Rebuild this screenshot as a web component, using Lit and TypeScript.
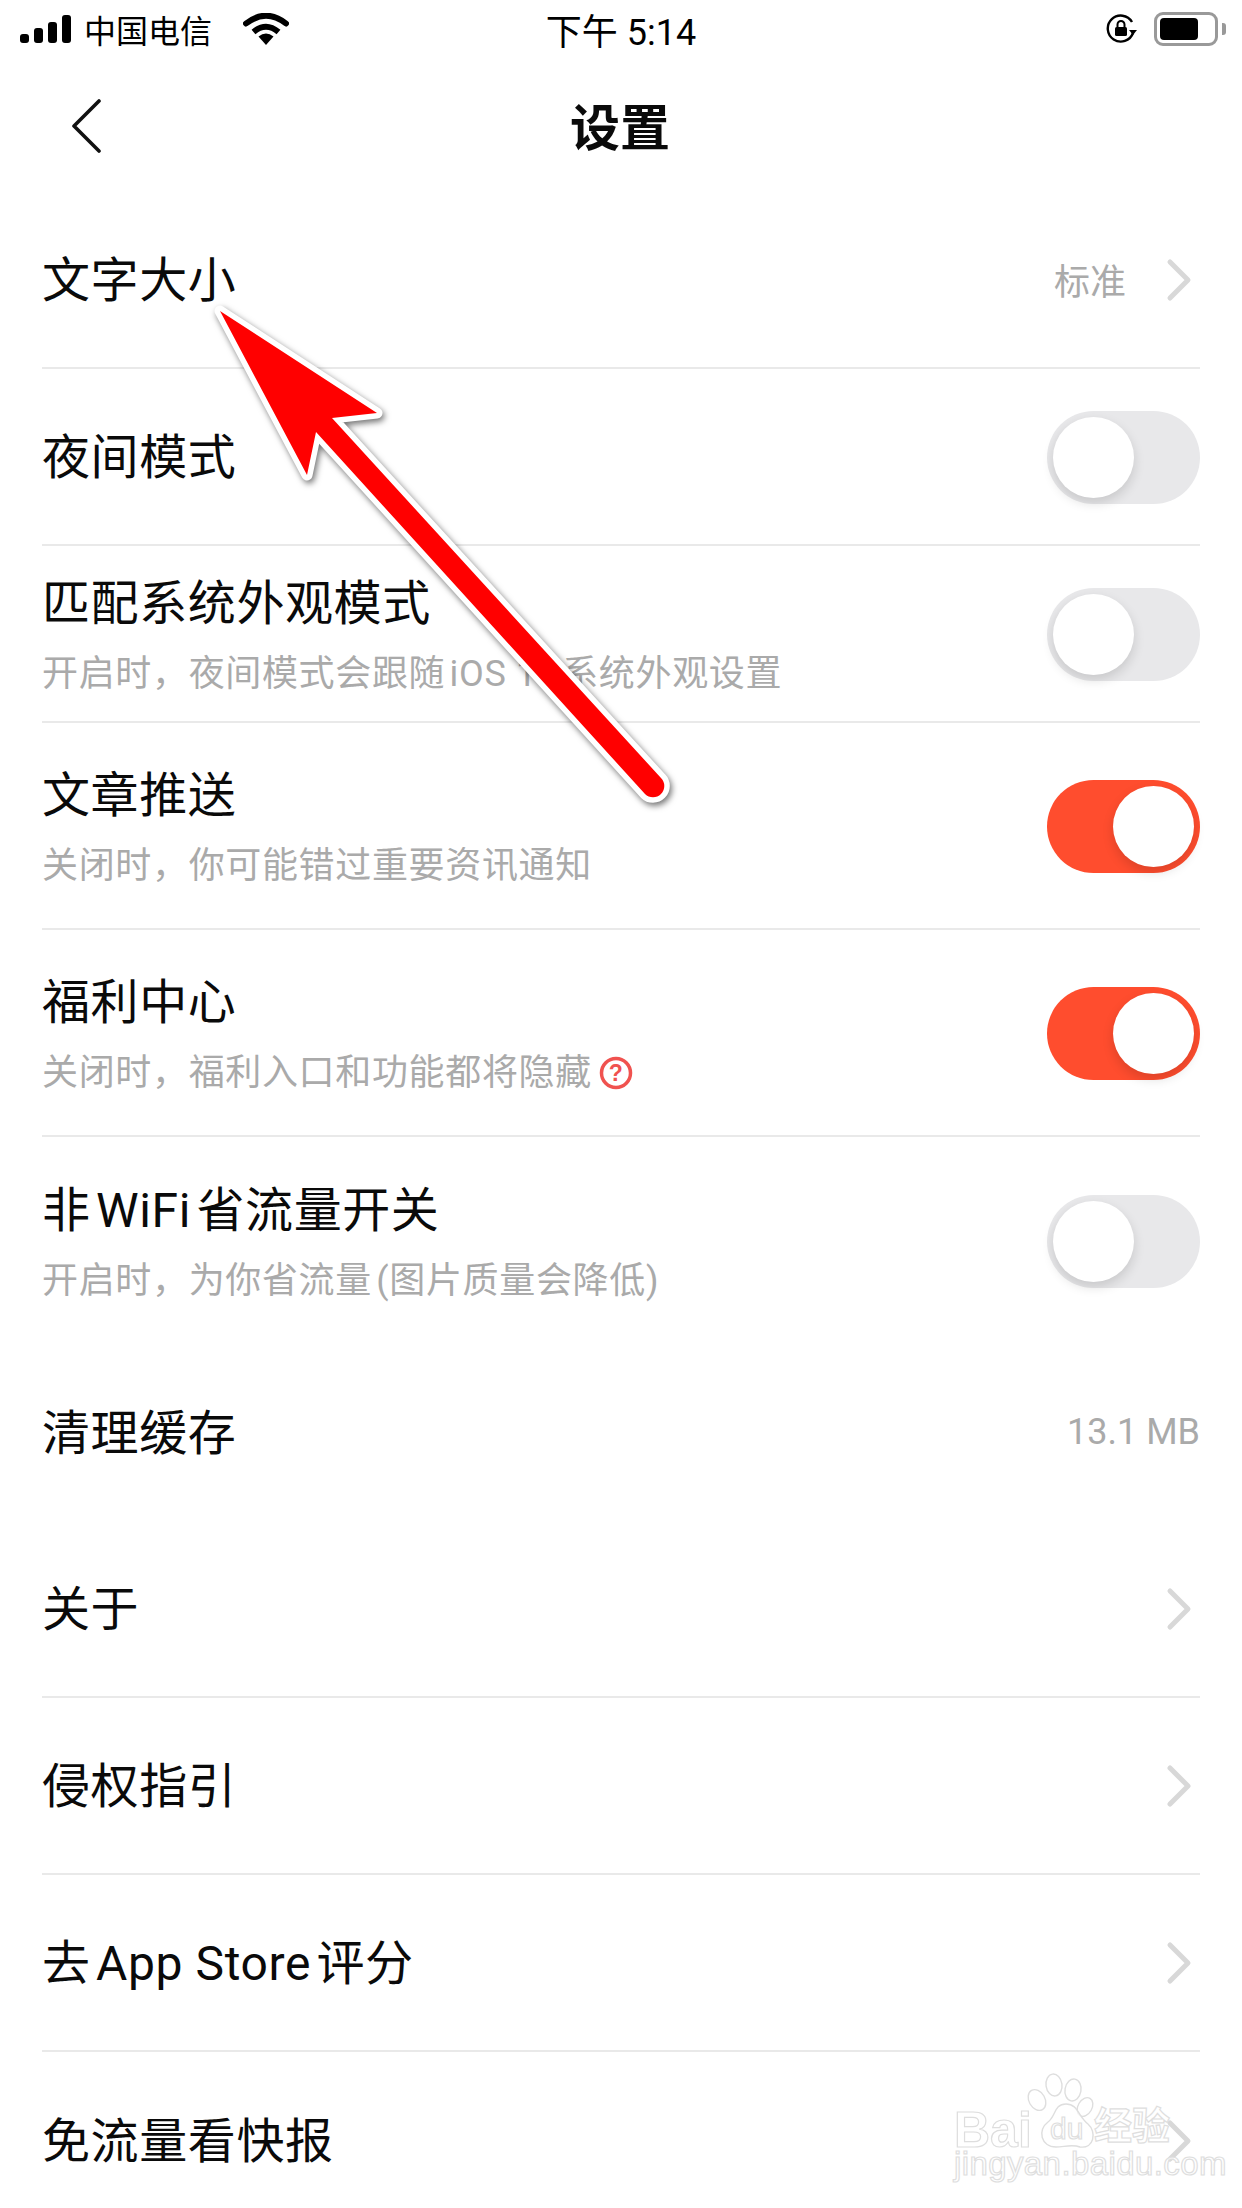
import { LitElement, html, css, nothing } from 'lit';
import { customElement, property } from 'lit/decorators.js';

interface IRow {
    title: string;
    sub?: string;
    help?: boolean;
    value?: string;
    chevron?: boolean;
    toggle?: 'on' | 'off';
    size: 'short' | 'tall' | 'wide';
    line?: boolean;
}

const ROWS: IRow[] = [
    { title: '文字大小', value: '标准', chevron: true, size: 'short', line: true },
    { title: '夜间模式', toggle: 'off', size: 'short', line: true },
    { title: '匹配系统外观模式', sub: '开启时，夜间模式会跟随\u200aiOS 13\u200a系统外观设置', toggle: 'off', size: 'short', line: true },
    { title: '文章推送', sub: '关闭时，你可能错过重要资讯通知', toggle: 'on', size: 'tall', line: true },
    { title: '福利中心', sub: '关闭时，福利入口和功能都将隐藏', help: true, toggle: 'on', size: 'tall', line: true },
    { title: '非\u200aWiFi\u200a省流量开关', sub: '开启时，为你省流量\u200a(图片质量会降低)', toggle: 'off', size: 'tall' },
    { title: '清理缓存', value: '13.1 MB', size: 'short' },
    { title: '关于', chevron: true, size: 'short', line: true },
    { title: '侵权指引', chevron: true, size: 'short', line: true },
    { title: '去\u200aApp Store\u200a评分', chevron: true, size: 'short', line: true },
    { title: '免流量看快报', chevron: true, size: 'short' },
];

@customElement('ui-toggle')
export class UiToggle extends LitElement {
    public static override styles = css`
        :host { display: block; flex: none; margin-top: 2px; }
        .track {
            display: flex;
            align-items: center;
            width: 153px;
            height: 93px;
            padding: 0 6px;
            box-sizing: border-box;
            border-radius: 47px;
            background: #e8e8ea;
        }
        .track.on { background: #ff4d2e; justify-content: flex-end; }
        .knob {
            width: 81px;
            height: 81px;
            border-radius: 50%;
            background: #fff;
            box-shadow: 0 5px 12px rgba(0, 0, 0, .14);
        }
    `;

    @property() state = 'off';

    override render() {
        return html`<div class="track ${this.state}"><div class="knob"></div></div>`;
    }
}

@customElement('app-root')
export class AppRoot extends LitElement {
    public static override styles = css`
        :host {
            display: block;
            position: relative;
            width: 1242px;
            height: 2208px;
            overflow: hidden;
            background: #fff;
            color: #0a0a0a;
            font-family: Roboto, "Noto Sans CJK SC", sans-serif;
        }

        .status {
            display: grid;
            grid-template-columns: 1fr auto 1fr;
            align-items: center;
            height: 60px;
            padding: 0 16px 2px 20px;
            box-sizing: border-box;
            color: #000;
        }
        .status-left { display: flex; align-items: center; }
        .carrier { font-size: 32px; margin-left: 12px; }
        .wifi { margin-left: 31px; }
        .time { font-size: 36px; margin-left: -4px; }
        .status-right { display: flex; align-items: center; justify-content: flex-end; }
        .battery {
            display: flex;
            width: 64px;
            height: 34px;
            margin-left: 16px;
            padding: 3px;
            box-sizing: border-box;
            border: 3px solid #999;
            border-radius: 9px;
        }
        .battery i { display: block; width: 38px; background: #000; border-radius: 4px; }
        .nub { width: 4px; height: 12px; margin-left: 4px; background: #999; border-radius: 0 3px 3px 0; }

        .nav {
            display: grid;
            grid-template-columns: 1fr auto 1fr;
            align-items: center;
            height: 132px;
            padding: 0 42px 0 72px;
        }
        .nav svg { display: block; }
        .nav-title { font-size: 50px; font-weight: 700; margin: -4px 0 0 -32px; }

        .list { padding: 0 42px; }
        .row {
            display: flex;
            align-items: center;
            justify-content: space-between;
            box-sizing: border-box;
        }
        .row.short { height: 177px; }
        .row.tall { height: 207px; }
        .row.line { border-bottom: 2px solid #e9e9e9; }
        .text { padding-top: 3px; }
        .text.has-sub { padding-top: 10px; }
        .title { font-size: 48px; line-height: 60px; letter-spacing: .6px; }
        .sub {
            display: flex;
            align-items: center;
            margin-top: 10px;
            font-size: 36px;
            line-height: 60px;
            letter-spacing: .66px;
            color: #aaa;
        }
        .sub svg { margin-left: 7px; }
        .side { display: flex; align-items: center; }
        .value { font-size: 36px; color: #aaa; margin-top: -1px; }
        .chevron { margin: 0 8px 0 40px; display: block; }

        .arrow { position: absolute; left: 0; top: 0; pointer-events: none; }

        .mark {
            position: absolute;
            left: 950px;
            top: 2070px;
            width: 240px;
            height: 125px;
            color: rgba(255, 255, 255, .65);
            font-family: "Liberation Sans", "Noto Sans CJK SC", sans-serif;
            -webkit-text-stroke: 1.2px #dedede;
        }
        .mark svg { position: absolute; left: 0; top: 0; }
        .mark span { position: absolute; white-space: nowrap; }
        .bai { left: 4px; top: 38px; font-size: 50px; line-height: 44px; font-weight: 700; }
        .du { left: 100px; top: 44px; font-size: 30px; line-height: 30px; }
        .jy { left: 144px; top: 34px; font-size: 38px; line-height: 44px; font-weight: 700; }
        .url { left: 4px; top: 84px; font-size: 33px; line-height: 20px; letter-spacing: .4px; }
    `;

    private _signal() {
        return html`<svg width="52" height="28" viewBox="0 0 52 28" fill="#000">
            <rect x="0" y="19" width="9" height="9" rx="3"/>
            <rect x="14" y="13" width="9" height="15" rx="3"/>
            <rect x="28" y="7" width="9" height="21" rx="3"/>
            <rect x="42" y="0" width="9" height="28" rx="3"/>
        </svg>`;
    }

    private _wifi() {
        return html`<svg class="wifi" width="46" height="32" viewBox="0 0 46 32">
            <path d="M23 32 L15.5 23.5 Q23 17.5 30.5 23.5 Z" fill="#000"/>
            <path d="M10.5 19 Q23 8.5 35.5 19" fill="none" stroke="#000" stroke-width="6"/>
            <path d="M3 10.5 Q23 -5 43 10.5" fill="none" stroke="#000" stroke-width="6" stroke-linecap="round"/>
        </svg>`;
    }

    private _rotationLock() {
        return html`<svg width="32" height="30" viewBox="0 0 32 30">
            <path d="M27 19 A13 13 0 1 1 26 8" fill="none" stroke="#000" stroke-width="2.4"/>
            <path d="M23 16 H31 L27 21 Z" fill="#000"/>
            <rect x="9" y="13" width="12" height="9" rx="1.5" fill="#000"/>
            <path d="M11.5 13 V10.5 A3.5 3.5 0 0 1 18.5 10.5 V13" fill="none" stroke="#000" stroke-width="2"/>
        </svg>`;
    }

    private _chevron() {
        return html`<svg class="chevron" width="26" height="44" viewBox="0 0 26 44">
            <path d="M4 4 L22 22 L4 40" fill="none" stroke="#d8d8d8" stroke-width="5" stroke-linecap="round" stroke-linejoin="round"/>
        </svg>`;
    }

    private _help() {
        return html`<svg width="34" height="34" viewBox="0 0 34 34">
            <circle cx="17" cy="17" r="14.5" fill="none" stroke="#f0524f" stroke-width="3.5"/>
            <text x="17" y="25" text-anchor="middle" font-size="23" font-weight="700" fill="#f0524f" font-family="Liberation Sans">?</text>
        </svg>`;
    }

    private _renderRow(r: IRow) {
        return html`
            <div class="row ${r.size} ${r.line ? 'line' : ''}">
                <div class="text ${r.sub ? 'has-sub' : ''}">
                    <div class="title">${r.title}</div>
                    ${r.sub ? html`<div class="sub">${r.sub}${r.help ? this._help() : nothing}</div>` : nothing}
                </div>
                <div class="side">
                    ${r.value ? html`<span class="value">${r.value}</span>` : nothing}
                    ${r.chevron ? this._chevron() : nothing}
                    ${r.toggle ? html`<ui-toggle state=${r.toggle}></ui-toggle>` : nothing}
                </div>
            </div>
        `;
    }

    override render() {
        return html`
            <div class="status">
                <div class="status-left">
                    ${this._signal()}
                    <span class="carrier">中国电信</span>
                    ${this._wifi()}
                </div>
                <div class="time">下午 5:14</div>
                <div class="status-right">
                    ${this._rotationLock()}
                    <div class="battery"><i></i></div>
                    <div class="nub"></div>
                </div>
            </div>

            <div class="nav">
                <svg width="32" height="54" viewBox="0 0 32 54">
                    <path d="M27 2 L2 27 L27 52" fill="none" stroke="#111" stroke-width="3.6" stroke-linecap="round" stroke-linejoin="round"/>
                </svg>
                <div class="nav-title">设置</div>
                <div></div>
            </div>

            <div class="list">${ROWS.map((r) => this._renderRow(r))}</div>

            <div class="mark">
                <svg width="240" height="125" viewBox="0 0 240 125" fill="rgba(255,255,255,.65)" stroke="#dedede" stroke-width="1.4">
                    <ellipse cx="87" cy="30" rx="8" ry="11" transform="rotate(-30 87 30)"/>
                    <ellipse cx="104" cy="15" rx="8" ry="11" transform="rotate(-8 104 15)"/>
                    <ellipse cx="123" cy="20" rx="8" ry="11" transform="rotate(10 123 20)"/>
                    <ellipse cx="135" cy="37" rx="7" ry="10" transform="rotate(30 135 37)"/>
                    <path d="M116 34 C104 34 106 46 98 52 C87 60 91 77 106 77 C114 77 122 74 130 77 C144 79 147 62 138 54 C128 46 128 34 116 34 Z"/>
                </svg>
                <span class="bai">Bai</span>
                <span class="du">du</span>
                <span class="jy">经验</span>
                <span class="url">jingyan.baidu.com</span>
            </div>

            <svg class="arrow" width="1242" height="900" viewBox="0 0 1242 900" style="filter: drop-shadow(2px 3px 3px rgba(0,0,0,.55))">
                <path d="M220 311 L377 413 L332 418 L661 778 A11 11 0 0 1 645 794 L316 432 L307 475 Z"
                    fill="#ff0000" stroke="#fff" stroke-width="11" stroke-linejoin="round" paint-order="stroke"/>
            </svg>
        `;
    }
}
